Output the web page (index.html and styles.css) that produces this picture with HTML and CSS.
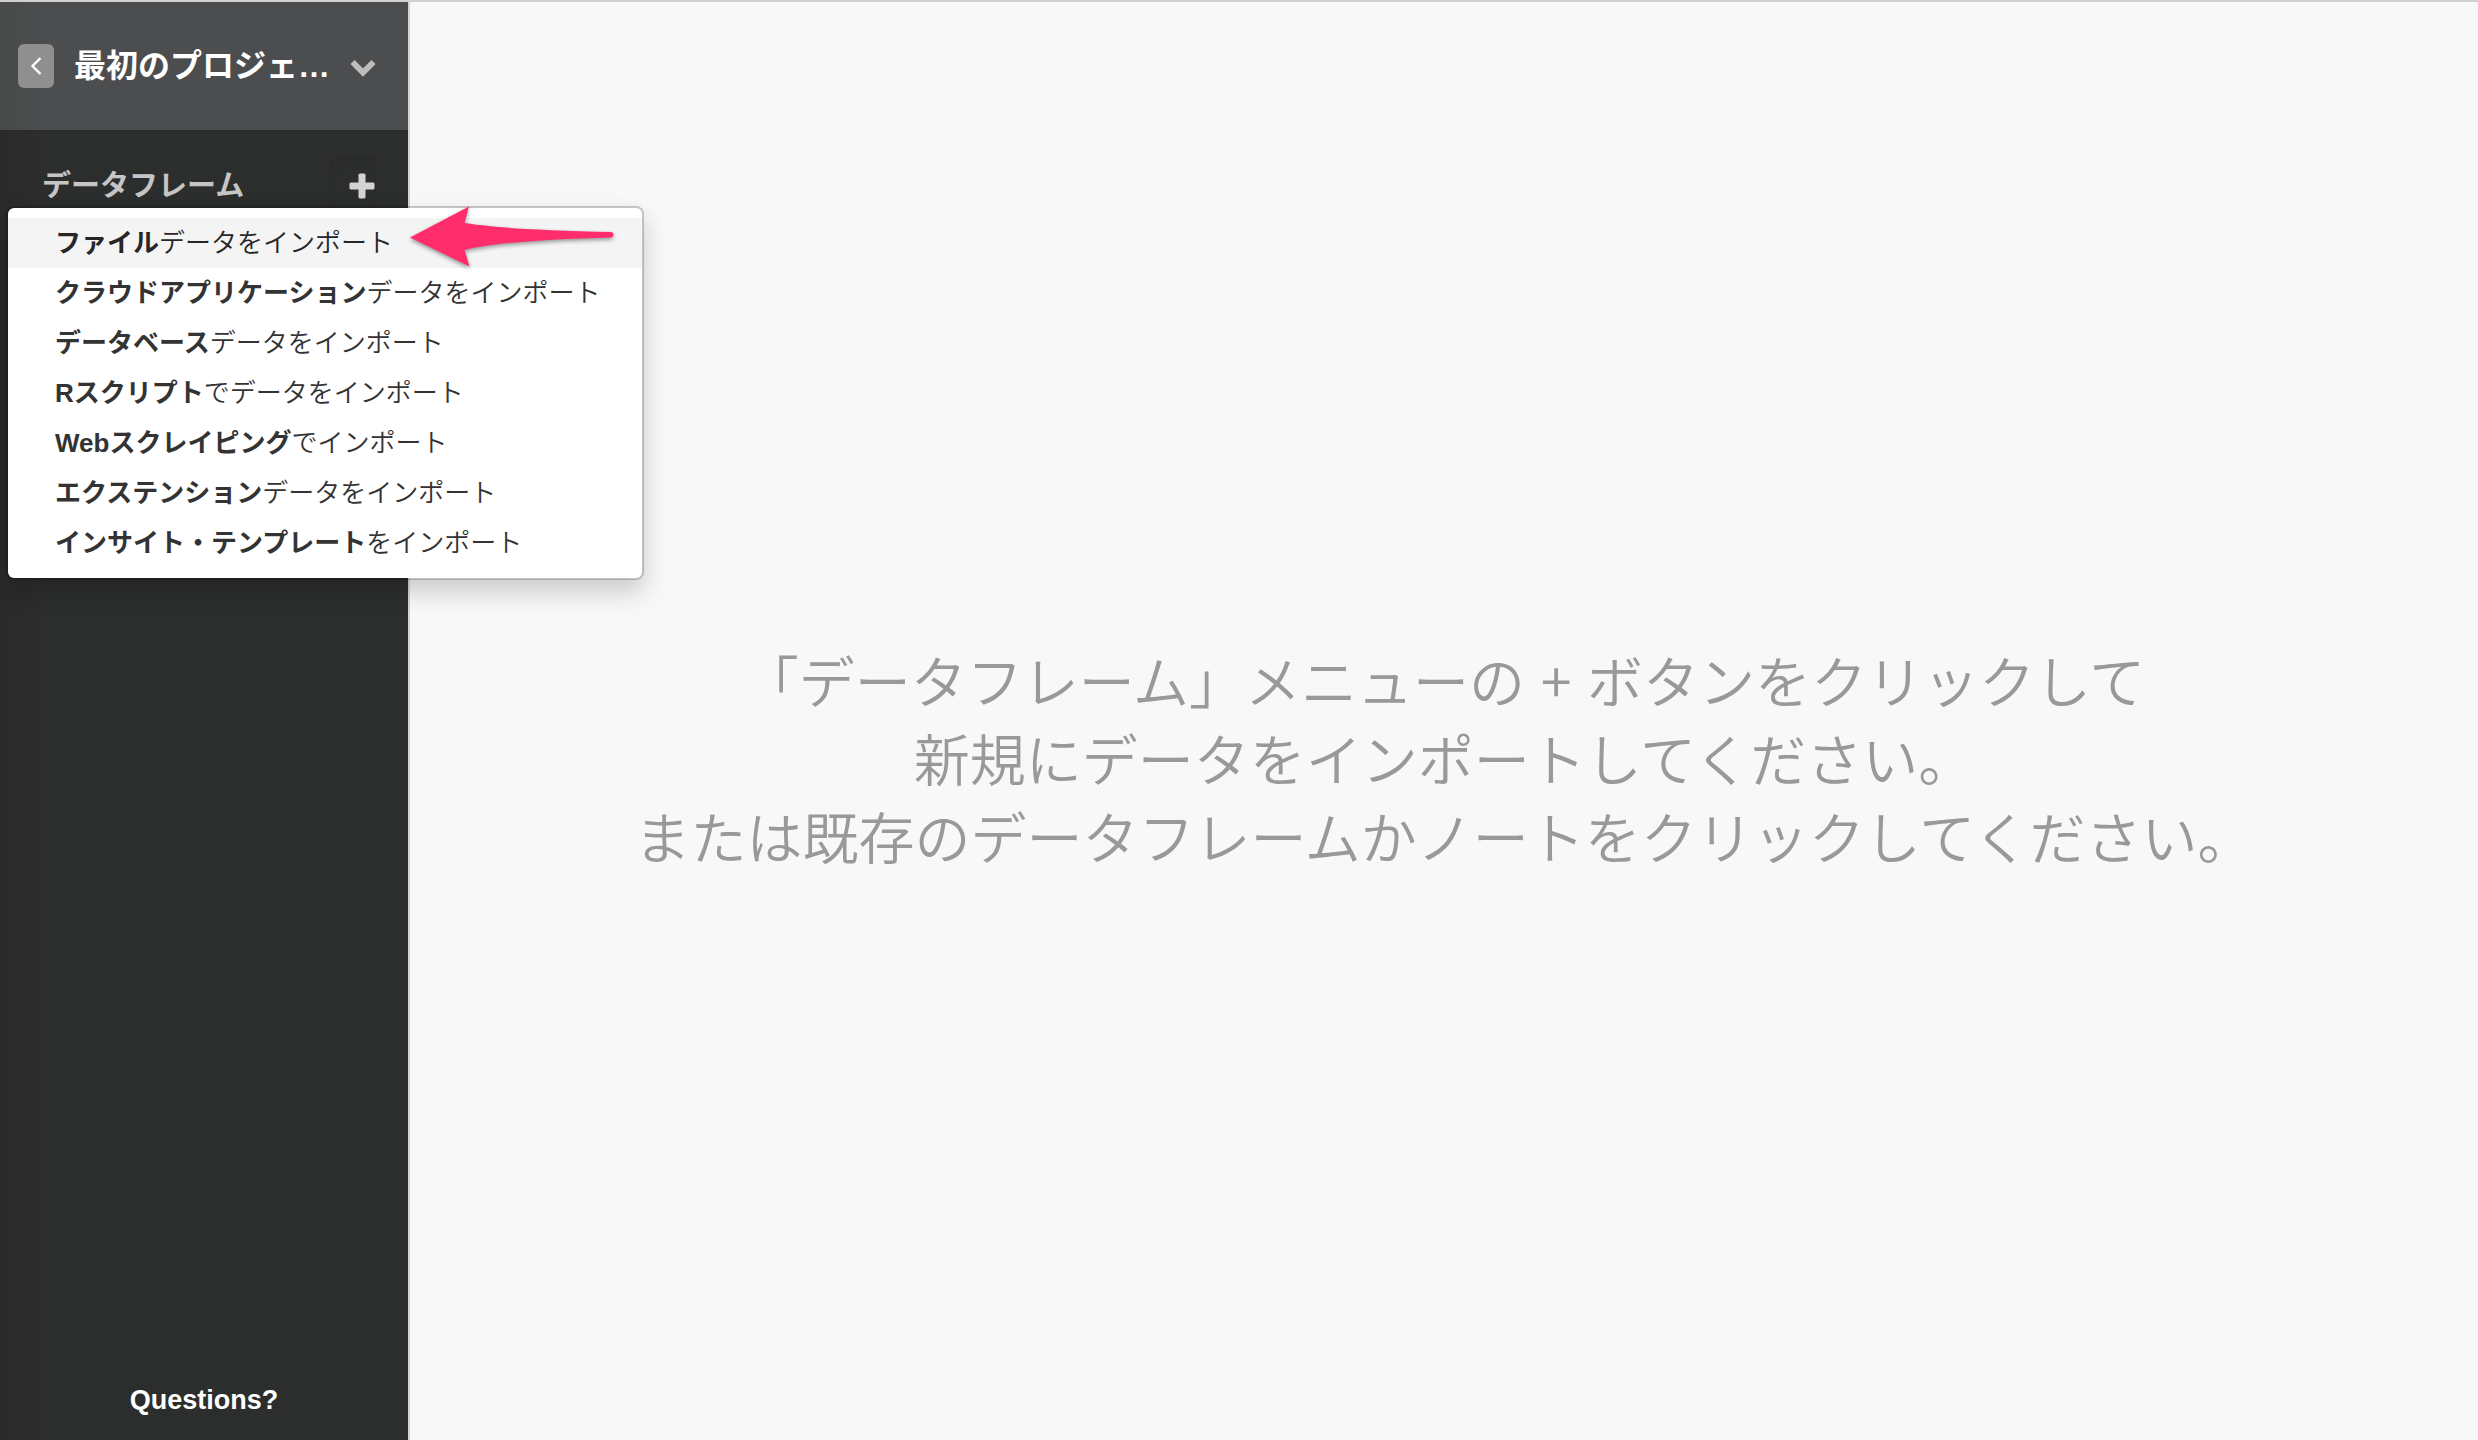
FILE: index.html
```html
<!DOCTYPE html>
<html lang="ja">
<head>
<meta charset="utf-8">
<title>最初のプロジェクト</title>
<link rel="stylesheet" href="styles.css">
</head>
<body>
<div class="app">
  <aside class="sidebar">
    <header class="project">
      <button class="back" type="button" aria-label="戻る">
        <svg width="12" height="18" viewBox="0 0 12 18"><path d="M10.500 1 2.500 9 10.500 17"/></svg>
      </button>
      <h1 class="project-name">最初のプロジェ…</h1>
      <button class="project-toggle" type="button" aria-label="プロジェクトメニュー">
        <svg width="26" height="18" viewBox="0 0 26 18"><path d="M2.500 3 13 13.500 23.500 3"/></svg>
      </button>
    </header>
    <section class="frames">
      <h2 class="frames-title">データフレーム</h2>
      <button class="add" type="button" aria-label="追加">
        <svg width="26" height="26" viewBox="0 0 26 26"><path d="M11 .5h4a1.500 1.500 0 0 1 1.500 1.500v7.500H24a1.500 1.500 0 0 1 1.500 1.500v4a1.500 1.500 0 0 1-1.500 1.500h-7.500V24a1.500 1.500 0 0 1-1.500 1.500h-4A1.500 1.500 0 0 1 9.500 24v-7.500H2A1.500 1.500 0 0 1 .5 15v-4A1.500 1.500 0 0 1 2 9.500h7.500V2A1.500 1.500 0 0 1 11 .5Z"/></svg>
      </button>
      <ul class="menu">
        <li><button class="menu-item active" type="button"><b>ファイル</b>データをインポート</button></li>
        <li><button class="menu-item" type="button"><b>クラウドアプリケーション</b>データをインポート</button></li>
        <li><button class="menu-item" type="button"><b>データベース</b>データをインポート</button></li>
        <li><button class="menu-item" type="button"><b>Rスクリプト</b>でデータをインポート</button></li>
        <li><button class="menu-item" type="button"><b>Webスクレイピング</b>でインポート</button></li>
        <li><button class="menu-item" type="button"><b>エクステンション</b>データをインポート</button></li>
        <li><button class="menu-item" type="button"><b>インサイト・テンプレート</b>をインポート</button></li>
      </ul>
      <svg class="arrow" width="206" height="64" viewBox="0 0 206 64"><path d="M0 31.500 59 .5 54.500 17C90 22.500 140 24.500 201 26Q203.500 26.200 203.500 28.500T201 31.500C140 33 80 37 54.500 44L59.500 60.500Z"/></svg>
    </section>
    <footer class="help"><a class="questions" href="#">Questions?</a></footer>
  </aside>
  <main class="content">
    <p class="hint">「データフレーム」メニューの <span class="plus">+</span> ボタンをクリックして<br>新規にデータをインポートしてください。<br>または既存のデータフレームかノートをクリックしてください。</p>
  </main>
</div>
</body>
</html>
```
FILE: styles.css
```css
* { box-sizing: border-box; }

body {
  margin: 0;
  background: #f8f8f8;
  font-family: "Liberation Sans", "Noto Sans CJK JP", sans-serif;
}

button {
  margin: 0;
  padding: 0;
  border: 0;
  background: none;
  font: inherit;
  cursor: pointer;
}

svg { display: block; }

.app {
  display: flex;
  min-height: 100vh;
  border-top: 2px solid #d0d0d0;
}

.sidebar {
  display: flex;
  flex-direction: column;
  flex: none;
  width: 410px;
  border-right: 2px solid #d6d6d6;
  background: linear-gradient(to right, #292a29, #2c2e2d 48px);
}

.project {
  display: flex;
  align-items: center;
  height: 128px;
  padding: 0 32px 0 18px;
  background: linear-gradient(to right, #484a49, #4c4d4f 48px);
}

.back {
  display: flex;
  align-items: center;
  justify-content: center;
  width: 36px;
  height: 44px;
  border-radius: 6px;
  background: #8f8f8f;
}

.back path {
  fill: none;
  stroke: #fff;
  stroke-width: 2.400;
}

.project-name {
  flex: 1;
  margin: 0 0 0 20px;
  color: #fff;
  font-size: 32px;
  font-weight: 700;
  line-height: 48px;
  white-space: nowrap;
}

.project-toggle { padding-top: 4px; }

.project-toggle path {
  fill: none;
  stroke: #bdbdbd;
  stroke-width: 6;
}

.frames {
  position: relative;
  display: flex;
  align-items: center;
  justify-content: space-between;
  margin-top: 28px;
  padding: 0 31px 0 42px;
}

.frames-title {
  margin: 0;
  color: #c4c5c4;
  font-size: 29px;
  font-weight: 700;
  line-height: 56px;
}

.add {
  display: flex;
  align-items: center;
  justify-content: flex-end;
  width: 48px;
  height: 56px;
  padding-right: 2px;
  border-radius: 6px;
  box-shadow: inset 0 2px 8px #282a29;
}

.add path { fill: #d4d4d4; }

.menu {
  position: absolute;
  z-index: 1;
  top: 48px;
  left: 6px;
  width: 638px;
  margin: 0;
  padding: 10px 0;
  border: 2px solid rgba(0, 0, 0, 0.2);
  border-radius: 8px;
  background: #fff;
  background-clip: padding-box;
  box-shadow: 0 12px 24px rgba(0, 0, 0, 0.18);
  list-style: none;
}

.menu-item {
  display: block;
  width: 100%;
  padding: 0 47px;
  color: #333;
  font-size: 26px;
  font-weight: 350;
  line-height: 50px;
  text-align: left;
  white-space: nowrap;
}

.menu-item b { font-weight: 700; }

.menu-item.active {
  background: #f4f4f4;
  color: #262626;
}

.arrow {
  position: absolute;
  z-index: 2;
  top: 48px;
  left: 410px;
  overflow: visible;
  filter: drop-shadow(0 2px 2px rgba(0, 0, 0, 0.4));
}

.arrow path { fill: #ff2d6b; }

.help {
  margin-top: auto;
  padding-bottom: 20px;
  text-align: center;
}

.questions {
  color: #fff;
  font-size: 27px;
  font-weight: 700;
  line-height: 40px;
  text-decoration: none;
}

.content {
  display: flex;
  flex: 1;
  align-items: center;
  justify-content: center;
  padding-top: 82px;
}

.hint {
  margin: 0;
  color: #999;
  font-size: 56px;
  font-weight: 350;
  line-height: 78px;
  text-align: center;
}

.plus {
  font-family: "Noto Sans CJK JP", sans-serif;
  line-height: 1;
}
```
